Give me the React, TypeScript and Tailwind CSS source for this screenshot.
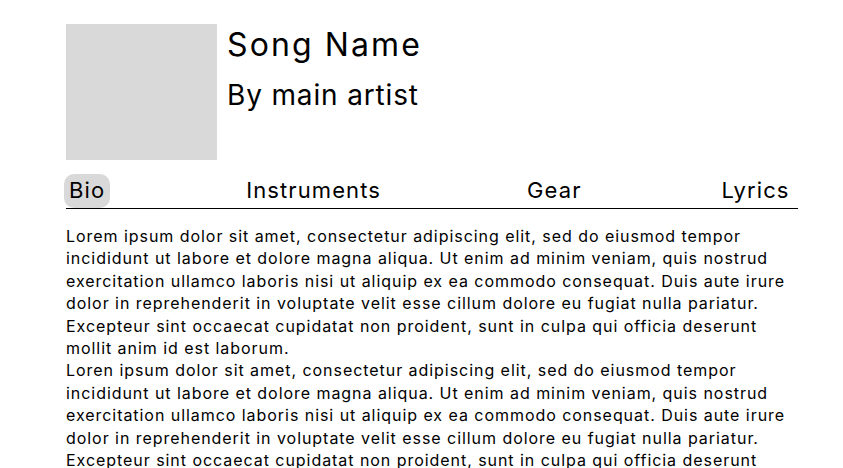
import { useState } from 'react';

const tabs = ['Bio', 'Instruments', 'Gear', 'Lyrics'];
const tabGap = ['', 'ml-[131px]', 'ml-[136px]', 'ml-[130px]'];

const lorem =
  'Lorem ipsum dolor sit amet, consectetur adipiscing elit, sed do eiusmod tempor incididunt ut labore et dolore magna aliqua. Ut enim ad minim veniam, quis nostrud exercitation ullamco laboris nisi ut aliquip ex ea commodo consequat. Duis aute irure dolor in reprehenderit in voluptate velit esse cillum dolore eu fugiat nulla pariatur. Excepteur sint occaecat cupidatat non proident, sunt in culpa qui officia deserunt mollit anim id est laborum.';

const loren = lorem.replace('Lorem', 'Loren');

export default function App() {
  const [active, setActive] = useState('Bio');

  return (
    <div className="min-h-screen bg-white text-black font-['Inter','Noto_Sans',sans-serif]">
      <div className="ml-[66px] w-[732px] pt-[24px]">
        <div className="flex gap-[10px]">
          <div className="w-[151px] h-[136px] bg-[#d9d9d9] shrink-0" />
          <div className="flex flex-col pt-[2px]">
            <h1 className="text-[32px] leading-[1.21] tracking-[2.1px]">Song Name</h1>
            <h2 className="text-[28px] leading-[1.21] tracking-[0.85px] mt-[14px]">By main artist</h2>
          </div>
        </div>

        <div className="mt-[14px] border-b border-black">
          <div className="flex -ml-[2px]">
            {tabs.map((t, i) => (
              <button
                key={t}
                onClick={() => setActive(t)}
                className={`h-[34px] px-[5px] pb-[3px] rounded-[10px] text-[22px] leading-[28px] tracking-[1.1px] ${tabGap[i]} ${
                  active === t ? 'bg-[#d9d9d9]' : ''
                }`}
              >
                {t}
              </button>
            ))}
          </div>
        </div>

        <div className="mt-[16px] text-[16px] leading-[22.4px] tracking-[0.95px]">
          <p>{lorem}</p>
          <p>{loren}</p>
        </div>
      </div>
    </div>
  );
}
